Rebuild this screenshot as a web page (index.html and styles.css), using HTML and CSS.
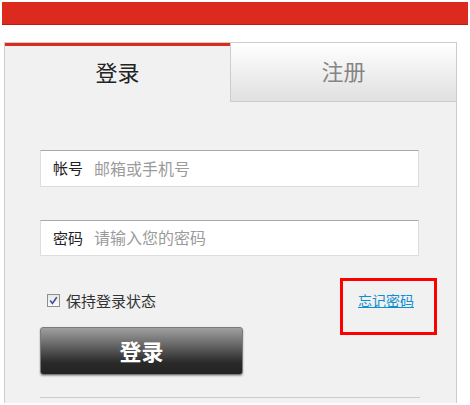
FILE: index.html
```html
<!DOCTYPE html>
<html lang="zh-CN">
<head>
<meta charset="utf-8">
<title>登录</title>
<link rel="stylesheet" href="styles.css">
</head>
<body>
<div class="topbar"></div>
<div class="panel">
  <div class="tabs">
    <div class="tab tab-active">登录</div>
    <div class="tab tab-idle">注册</div>
  </div>
  <form class="form">
    <label class="field">
      <span class="field-label">帐号</span>
      <input class="field-input" type="text" placeholder="邮箱或手机号">
    </label>
    <label class="field field-second">
      <span class="field-label">密码</span>
      <input class="field-input" type="password" placeholder="请输入您的密码">
    </label>
    <div class="options">
      <label class="remember">
        <span class="checkbox">
          <svg viewBox="0 0 11 11" width="11" height="11"><path d="M2.2 5.6 L4.4 8.4 L8.8 2.2" fill="none" stroke="#3d4f96" stroke-width="1.6"/></svg>
        </span>
        <span>保持登录状态</span>
      </label>
      <a class="forgot" href="#">忘记密码<span class="highlight"></span></a>
    </div>
    <button class="submit" type="button">登录</button>
    <div class="divider"></div>
  </form>
</div>
</body>
</html>
```
FILE: styles.css
```css
* { box-sizing: border-box; }
html, body { margin: 0; background: #fff; }
body {
  padding: 2px;
  font-family: "Noto Sans CJK SC", "Noto Sans", sans-serif;
  color: #333;
  overflow: hidden;
}
.topbar {
  height: 23px;
  background: #dd2a1e;
  border-bottom: 1px solid #b81c12;
}
.panel {
  margin: 17px 0 0 2px;
  width: 453px;
  height: 361px;
  border: 1px solid #cccccc;
  border-bottom: none;
  background: #f1f1f1;
}
.tabs {
  display: flex;
  height: 59px;
}
.tab {
  display: flex;
  align-items: center;
  justify-content: center;
  font-size: 22px;
  line-height: 1;
}
.tab-active {
  flex: 0 0 225px;
  border-top: 3px solid #dd2a1e;
  color: #222;
  padding-bottom: 6px;
}
.tab-idle {
  flex: 1;
  color: #858585;
  border-left: 1px solid #cccccc;
  border-bottom: 1px solid #cccccc;
  background: linear-gradient(#ffffff, #e0e0e0);
  padding-bottom: 4px;
}
.form {
  padding: 48px 0 0 35px;
  width: 414px;
}
.field {
  display: flex;
  align-items: center;
  height: 37px;
  background: #fff;
  border: 1px solid #dddddd;
  border-top-color: #a8a8a8;
  padding: 0 0 2px 12px;
}
.field-second {
  margin-top: 33px;
  height: 36px;
}
.field-label {
  font-size: 15px;
  color: #222;
  margin-right: 11px;
  line-height: 1;
}
.field-input {
  flex: 1;
  border: none;
  outline: none;
  background: transparent;
  font-family: inherit;
  font-size: 16px;
  line-height: 18px;
  height: 18px;
  padding: 0;
  color: #333;
}
.field-input::placeholder { color: #9b9b9b; }
.options {
  display: flex;
  justify-content: space-between;
  align-items: center;
  height: 20px;
  margin-top: 34px;
  padding: 0 5px 0 7px;
}
.remember {
  display: flex;
  align-items: center;
  gap: 6px;
  font-size: 15px;
  color: #333;
}
.checkbox {
  width: 13px;
  height: 13px;
  border: 1px solid #8e8e8e;
  background: linear-gradient(#e6e6e6, #fbfbfb);
  display: flex;
  align-items: center;
  justify-content: center;
}
.forgot {
  position: relative;
  font-size: 14px;
  color: #0f8fcf;
  text-decoration: underline;
  line-height: 16px;
}
.highlight {
  position: absolute;
  left: -18px;
  top: -14px;
  width: 97px;
  height: 57px;
  border: 3px solid #ff0000;
}
.submit {
  display: block;
  margin-top: 17px;
  width: 203px;
  height: 48px;
  border: 1px solid #7a7a7a;
  border-radius: 3px;
  background: linear-gradient(#a0a0a0, #5a5a5a 45%, #2a2a2a 75%, #222);
  box-shadow: 0 1px 2px rgba(0,0,0,0.35);
  color: #fff;
  font-family: inherit;
  font-size: 22px;
  font-weight: bold;
  line-height: 1;
  padding: 0 0 3px;
}
.divider {
  margin-top: 22px;
  height: 1px;
  width: 380px;
  background: #cccccc;
}
```
